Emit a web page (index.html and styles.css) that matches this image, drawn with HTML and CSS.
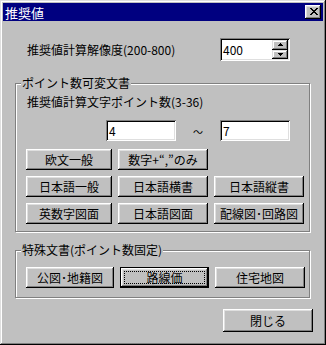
FILE: index.html
```html
<!DOCTYPE html>
<html lang="ja">
<head>
<meta charset="utf-8">
<title>推奨値</title>
<link rel="stylesheet" href="styles.css">
</head>
<body>
<div class="window">
  <div class="titlebar">
    <span class="title">推奨値</span>
    <div class="close-btn">
      <svg width="8" height="7" viewBox="0 0 8 7"><path fill="#000" d="M0 0h2v1H0zM6 0h2v1H6zM1 1h2v1H1zM5 1h2v1H5zM2 2h4v1H2zM3 3h2v1H3zM2 4h4v1H2zM1 5h2v1H1zM5 5h2v1H5zM0 6h2v1H0zM6 6h2v1H6z"/></svg>
    </div>
  </div>
  <div class="content">
    <div class="res-row">
      <span class="label res-label">推奨値計算解像度(200-800)</span>
      <div class="edit spin-edit">
        <span class="edit-text">400</span>
        <div class="spin">
          <div class="spin-btn"><svg width="5" height="3" viewBox="0 0 5 3"><path fill="#000" d="M2 0h1v1h1v1h1v1H0V2h1V1h1z"/></svg></div>
          <div class="spin-btn"><svg width="5" height="3" viewBox="0 0 5 3"><path fill="#000" d="M0 0h5v1H4v1H3v1H2V2H1V1H0z"/></svg></div>
        </div>
      </div>
    </div>

    <div class="group group-var">
      <span class="legend">ポイント数可変文書</span>
      <div class="label pt-label">推奨値計算文字ポイント数(3-36)</div>
      <div class="range-row">
        <div class="edit num-edit"><span class="edit-text">4</span></div>
        <span class="tilde">～</span>
        <div class="edit num-edit"><span class="edit-text">7</span></div>
      </div>
      <div class="btn-grid">
        <button class="btn">欧文一般</button>
        <button class="btn">数字+“,”のみ</button>
        <span></span>
        <button class="btn">日本語一般</button>
        <button class="btn">日本語横書</button>
        <button class="btn">日本語縦書</button>
        <button class="btn">英数字図面</button>
        <button class="btn">日本語図面</button>
        <button class="btn">配線図･回路図</button>
      </div>
    </div>

    <div class="group group-fixed">
      <span class="legend">特殊文書(ポイント数固定)</span>
      <div class="btn-row">
        <button class="btn">公図･地籍図</button>
        <button class="btn btn-default"><span class="focus">路線価</span></button>
        <button class="btn">住宅地図</button>
      </div>
    </div>

    <div class="footer">
      <button class="btn btn-close">閉じる</button>
    </div>
  </div>
</div>
</body>
</html>
```

FILE: styles.css
```css
html, body {
  margin: 0;
  padding: 0;
  background: #c0c0c0;
}

body {
  font-family: "Noto Sans CJK JP", "Noto Sans", sans-serif;
  font-size: 12px;
  line-height: 14px;
  color: #000;
}

.window {
  width: 326px;
  height: 345px;
  box-sizing: border-box;
  padding: 3px;
  background: #c0c0c0;
  box-shadow:
    inset -1px -1px 0 #000,
    inset 1px 1px 0 #dfdfdf,
    inset -2px -2px 0 #808080,
    inset 2px 2px 0 #fff;
}

.titlebar {
  height: 18px;
  background: #000080;
  color: #fff;
  display: flex;
  align-items: center;
  justify-content: space-between;
  padding: 0 2px 0 2px;
}

.title {
  font-size: 13px;
  line-height: 15px;
}

.close-btn {
  width: 16px;
  height: 14px;
  box-sizing: border-box;
  background: #c0c0c0;
  display: flex;
  align-items: center;
  justify-content: center;
  padding: 0 0 1px 1px;
  box-shadow:
    inset -1px -1px 0 #000,
    inset 1px 1px 0 #fff,
    inset -2px -2px 0 #808080,
    inset 2px 2px 0 #dfdfdf;
}

.content {
  padding-left: 12px;
}

.label {
  white-space: nowrap;
}

.res-row {
  margin-top: 17px;
  height: 23px;
  display: flex;
  align-items: center;
  padding-left: 12px;
}

.res-label {
  width: 193px;
}

.edit {
  box-sizing: border-box;
  background: #fff;
  box-shadow:
    inset 1px 1px 0 #808080,
    inset -1px -1px 0 #fff,
    inset 2px 2px 0 #000,
    inset -2px -2px 0 #dfdfdf;
  display: flex;
  align-items: center;
  padding: 2px;
}

.edit-text {
  flex: 1;
  padding-left: 1px;
  font-size: 12px;
  line-height: 14px;
}

.spin-edit {
  width: 70px;
  height: 23px;
}

.spin {
  width: 16px;
  height: 19px;
  display: flex;
  flex-direction: column;
}

.spin-btn {
  flex: 1;
  background: #c0c0c0;
  display: flex;
  align-items: center;
  justify-content: center;
  box-shadow:
    inset -1px -1px 0 #000,
    inset 1px 1px 0 #dfdfdf,
    inset -2px -2px 0 #808080,
    inset 2px 2px 0 #fff;
}

.group {
  position: relative;
  width: 295px;
  box-sizing: border-box;
  border: 1px solid #808080;
  box-shadow: inset 1px 1px 0 #fff, 1px 1px 0 #fff;
}

.legend {
  position: absolute;
  top: -8px;
  left: 5px;
  padding: 0 1px;
  background: #c0c0c0;
  white-space: nowrap;
}

.group-var {
  margin-top: 22px;
  height: 149px;
  padding: 11px 0 0 10px;
}

.pt-label {
  margin-left: 1px;
}

.range-row {
  margin-top: 11px;
  height: 21px;
  display: flex;
  align-items: center;
  padding-left: 80px;
}

.num-edit {
  width: 70px;
  height: 21px;
}

.tilde {
  width: 44px;
  text-align: center;
  font-size: 10px;
  padding-top: 2px;
}

.btn-grid {
  margin-top: 8px;
  display: grid;
  grid-template-columns: 86px 90px 90px;
  grid-auto-rows: 21px;
  column-gap: 6px;
  row-gap: 6px;
}

.btn {
  font-family: "Noto Sans CJK JP", "Noto Sans", sans-serif;
  font-size: 12px;
  line-height: 14px;
  color: #000;
  background: #c0c0c0;
  border: none;
  margin: 0;
  padding: 0;
  white-space: nowrap;
  overflow: visible;
  display: flex;
  align-items: center;
  justify-content: center;
  box-shadow:
    inset -1px -1px 0 #000,
    inset 1px 1px 0 #fff,
    inset -2px -2px 0 #808080,
    inset 2px 2px 0 #dfdfdf;
}

.group-fixed {
  margin-top: 18px;
  height: 48px;
  padding: 16px 0 0 10px;
}

.btn-row {
  display: grid;
  grid-template-columns: 88px 89px 90px;
  grid-auto-rows: 21px;
  column-gap: 6px;
}

.btn-default {
  box-shadow:
    inset 0 0 0 1px #000,
    inset -2px -2px 0 #000,
    inset 2px 2px 0 #fff,
    inset -3px -3px 0 #808080,
    inset 3px 3px 0 #dfdfdf;
}

.focus {
  display: flex;
  align-items: center;
  justify-content: center;
  width: calc(100% - 8px);
  height: calc(100% - 8px);
  box-sizing: border-box;
  border: 1px dotted #000;
}

.footer {
  margin-top: 11px;
  display: flex;
  justify-content: flex-end;
  padding-right: 10px;
}

.btn-close {
  width: 90px;
  height: 23px;
}
```
